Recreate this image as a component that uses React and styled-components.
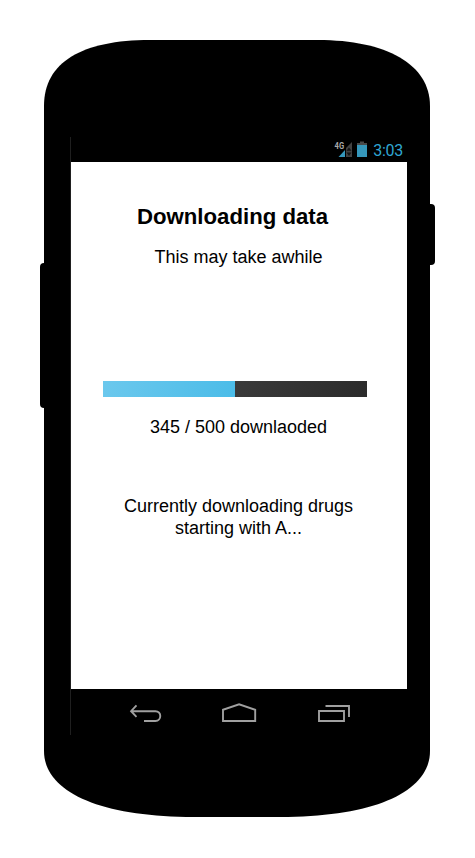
import React from "react";
import styled, { createGlobalStyle } from "styled-components";

const GlobalStyle = createGlobalStyle`
  body { margin: 0; background: #fff; }
  * { box-sizing: border-box; }
`;

const Page = styled.main`
  width: 475px;
  height: 858px;
  padding: 40px 40px 0;
  display: flex;
  align-items: flex-start;
  background: #fff;
  font-family: "Liberation Sans", Arial, sans-serif;
  color: #000;
`;

const SideKey = styled.span`
  flex: none;
  width: ${(p) => p.$width}px;
  height: ${(p) => p.$height}px;
  margin-top: ${(p) => p.$top}px;
  border-radius: ${(p) => (p.$side === "left" ? "4px 0 0 4px" : "0 4px 4px 0")};
  background: #000;
`;

const Body = styled.div`
  flex: none;
  width: 386px;
  height: 777px;
  padding: 97px 0 0 26px;
  clip-path: path("M0 66C0 22 38 0 106 0H274C342 0 386 24 386 66V711C386 752 330 777 236 777H150C56 777 0 752 0 711Z");
  background: #000;
`;

const Display = styled.div`
  width: 337px;
  height: 598px;
  border-left: 1px solid #1f1f1f;
  display: flex;
  flex-direction: column;
`;

const StatusBar = styled.header`
  height: 25px;
  padding: 0 4px 0 0;
  display: flex;
  justify-content: flex-end;
  align-items: center;
`;

const Clock = styled.time`
  margin: 2px 0 0 5px;
  font: 16px/24px Roboto, sans-serif;
  letter-spacing: -0.3px;
  color: #2fa6d2;
`;

const Screen = styled.section`
  height: 527px;
  padding-top: 41px;
  display: flex;
  flex-direction: column;
  align-items: center;
  background: #fff;
  text-align: center;
`;

const Title = styled.h1`
  margin: 0 13px 0 0;
  font-size: 22.2px;
  line-height: 28px;
  font-weight: 700;
`;

const Message = styled.p`
  width: 250px;
  margin: ${(p) => p.$top}px 1px 0 0;
  font-size: 18px;
  line-height: 22px;
`;

const Track = styled.div`
  width: 264px;
  height: 16px;
  margin: 113px 8px 0 0;
  background: linear-gradient(110deg, #3d3d3d 40%, #2b2b2b);
`;

const Fill = styled.div`
  height: 100%;
  background: linear-gradient(100deg, #6bc8ed, #4bbce8);
`;

const NavBar = styled.nav`
  height: 46px;
`;

const StatusIcons = () => (
  <svg width="34" height="18" viewBox="334 141 34 18" aria-hidden="true">
    <text x="334.6" y="149" fontFamily="Roboto, sans-serif" fontWeight="700" fontSize="9.5" textLength="9.5" lengthAdjust="spacingAndGlyphs" fill="#aaa">4G</text>
    <path d="M352 142v15h-6v-9z" fill="#414141" />
    <path d="M338.5 157l6.5-7v7z" fill="#3597bb" />
    <path d="M346.5 150.8l2.5-3.3 2.5 3.3zM346.5 152.5h5l-2.5 3.5z" fill="#151515" />
    <path d="M357 143h3v-1.5h4v1.5h3v3h-10z" fill="#484848" />
    <path d="M357 145h10v12h-10z" fill="#3597bb" />
  </svg>
);

const NavIcons = () => (
  <svg width="336" height="46" viewBox="71 689 336 46" fill="none" stroke="#a0a0a0" strokeWidth="1.9" aria-hidden="true">
    <path d="M136.5 705.4l-5.4 5.8 5.4 5.6M131 711.2h24.4c6.5 0 6.5 9.8 0 9.8H144" />
    <path d="M223 721v-11.2l16.1-5.5 16.1 5.5V721z" />
    <path d="M319 711h25v10h-25zM325.5 706H349v11" />
  </svg>
);

export default function App() {
  const progress = 50;
  return (
    <>
      <GlobalStyle />
      <Page>
        <SideKey $side="left" $width={4} $height={145} $top={223} />
        <Body>
          <Display>
            <StatusBar>
              <StatusIcons />
              <Clock>3:03</Clock>
            </StatusBar>
            <Screen>
              <Title>Downloading data</Title>
              <Message $top={15}>This may take awhile</Message>
              <Track role="progressbar" aria-valuenow={progress}>
                <Fill style={{ width: `${progress}%` }} />
              </Track>
              <Message $top={19}>345 / 500 downlaoded</Message>
              <Message $top={57}>Currently downloading drugs starting with A...</Message>
            </Screen>
            <NavBar>
              <NavIcons />
            </NavBar>
          </Display>
        </Body>
        <SideKey $side="right" $width={5} $height={61} $top={164} />
      </Page>
    </>
  );
}
